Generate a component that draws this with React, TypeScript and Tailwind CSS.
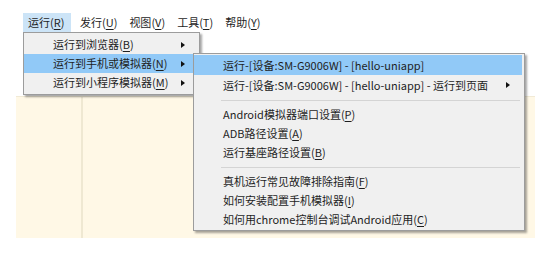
import React from 'react'

const FONT = "font-['Noto_Sans_CJK_SC','Noto_Sans',sans-serif]"

type Item = { label: string; key?: string; arrow?: boolean; active?: boolean }

// label with the accelerator letter underlined, e.g. 运行(R)
function Label({ label, k }: { label: string; k?: string }) {
  if (!k) return <span>{label}</span>
  return (
    <span>
      {label}(<span className="underline underline-offset-2">{k}</span>)
    </span>
  )
}

function Arrow() {
  return <span className="h-0 w-0 border-y-[3.5px] border-l-[4px] border-y-transparent border-l-[#111]" />
}

const topMenu: [string, string][] = [
  ['运行', 'R'],
  ['发行', 'U'],
  ['视图', 'V'],
  ['工具', 'T'],
  ['帮助', 'Y'],
]

const runMenu: Item[] = [
  { label: '运行到浏览器', key: 'B', arrow: true },
  { label: '运行到手机或模拟器', key: 'N', arrow: true, active: true },
  { label: '运行到小程序模拟器', key: 'M', arrow: true },
]

const deviceMenu: (Item | 'sep')[] = [
  { label: '运行-[设备:SM-G9006W] - [hello-uniapp]', active: true },
  { label: '运行-[设备:SM-G9006W] - [hello-uniapp] - 运行到页面', arrow: true },
  'sep',
  { label: 'Android模拟器端口设置', key: 'P' },
  { label: 'ADB路径设置', key: 'A' },
  { label: '运行基座路径设置', key: 'B' },
  'sep',
  { label: '真机运行常见故障排除指南', key: 'F' },
  { label: '如何安装配置手机模拟器', key: 'I' },
  { label: '如何用chrome控制台调试Android应用', key: 'C' },
]

export default function App() {
  return (
    <div className={`relative h-[259px] w-[554px] overflow-hidden bg-white text-[11px] text-[#1e1e1e] ${FONT}`}>
      {/* menu bar */}
      <div className="flex pl-[23px] pt-[13px]">
        {topMenu.map(([l, k], i) => (
          <div
            key={l}
            className={`flex h-[19px] items-center whitespace-nowrap px-[5px] leading-none ${i === 0 ? 'mr-[4px] w-[48px] bg-[#cce4f7]' : 'mr-[2px]'}`}
          >
            <Label label={l} k={k} />
          </div>
        ))}
      </div>

      {/* editor area behind the menus */}
      <div className="ml-[16px] mt-[64px] h-[142px] w-[519px] border-t border-[#f1ead6] bg-[#fff8e6]">
        <div className="ml-[65px] h-full w-[2px] bg-[#efe8d2]" />
      </div>

      {/* 运行 dropdown */}
      <div className="absolute left-[23px] top-[32px] w-[177px] border border-[#9c9c9c] bg-[#f0f0f0] py-[2px] shadow-[2px_2px_2px_rgba(0,0,0,0.35)]">
        {runMenu.map(it => (
          <div
            key={it.label}
            className={`flex h-[19px] items-center whitespace-nowrap pl-[29px] pr-[14px] leading-none ${it.active ? 'bg-[#91c9f7]' : ''}`}
          >
            <span className="flex-1">
              <Label label={it.label} k={it.key} />
            </span>
            {it.arrow && <Arrow />}
          </div>
        ))}
      </div>

      {/* 运行到手机或模拟器 submenu */}
      <div className="absolute left-[193px] top-[53px] w-[332px] border border-[#9c9c9c] bg-[#f0f0f0] py-[1px] pr-[2px] shadow-[2px_2px_2px_rgba(0,0,0,0.35)]">
        {deviceMenu.map((it, i) =>
          it === 'sep' ? (
            <div key={i} className="flex h-[10px] items-center pl-[27px] pr-[2px]">
              <div className="h-px w-full bg-[#d4d4d4]" />
            </div>
          ) : (
            <div
              key={it.label}
              className={`flex items-center whitespace-nowrap pl-[29px] pr-[12px] leading-none ${i < 2 ? 'h-[20px]' : 'h-[19px]'} ${it.active ? 'bg-[#91c9f7]' : ''}`}
            >
              <span className="flex-1">
                <Label label={it.label} k={it.key} />
              </span>
              {it.arrow && <Arrow />}
            </div>
          ),
        )}
      </div>
    </div>
  )
}
